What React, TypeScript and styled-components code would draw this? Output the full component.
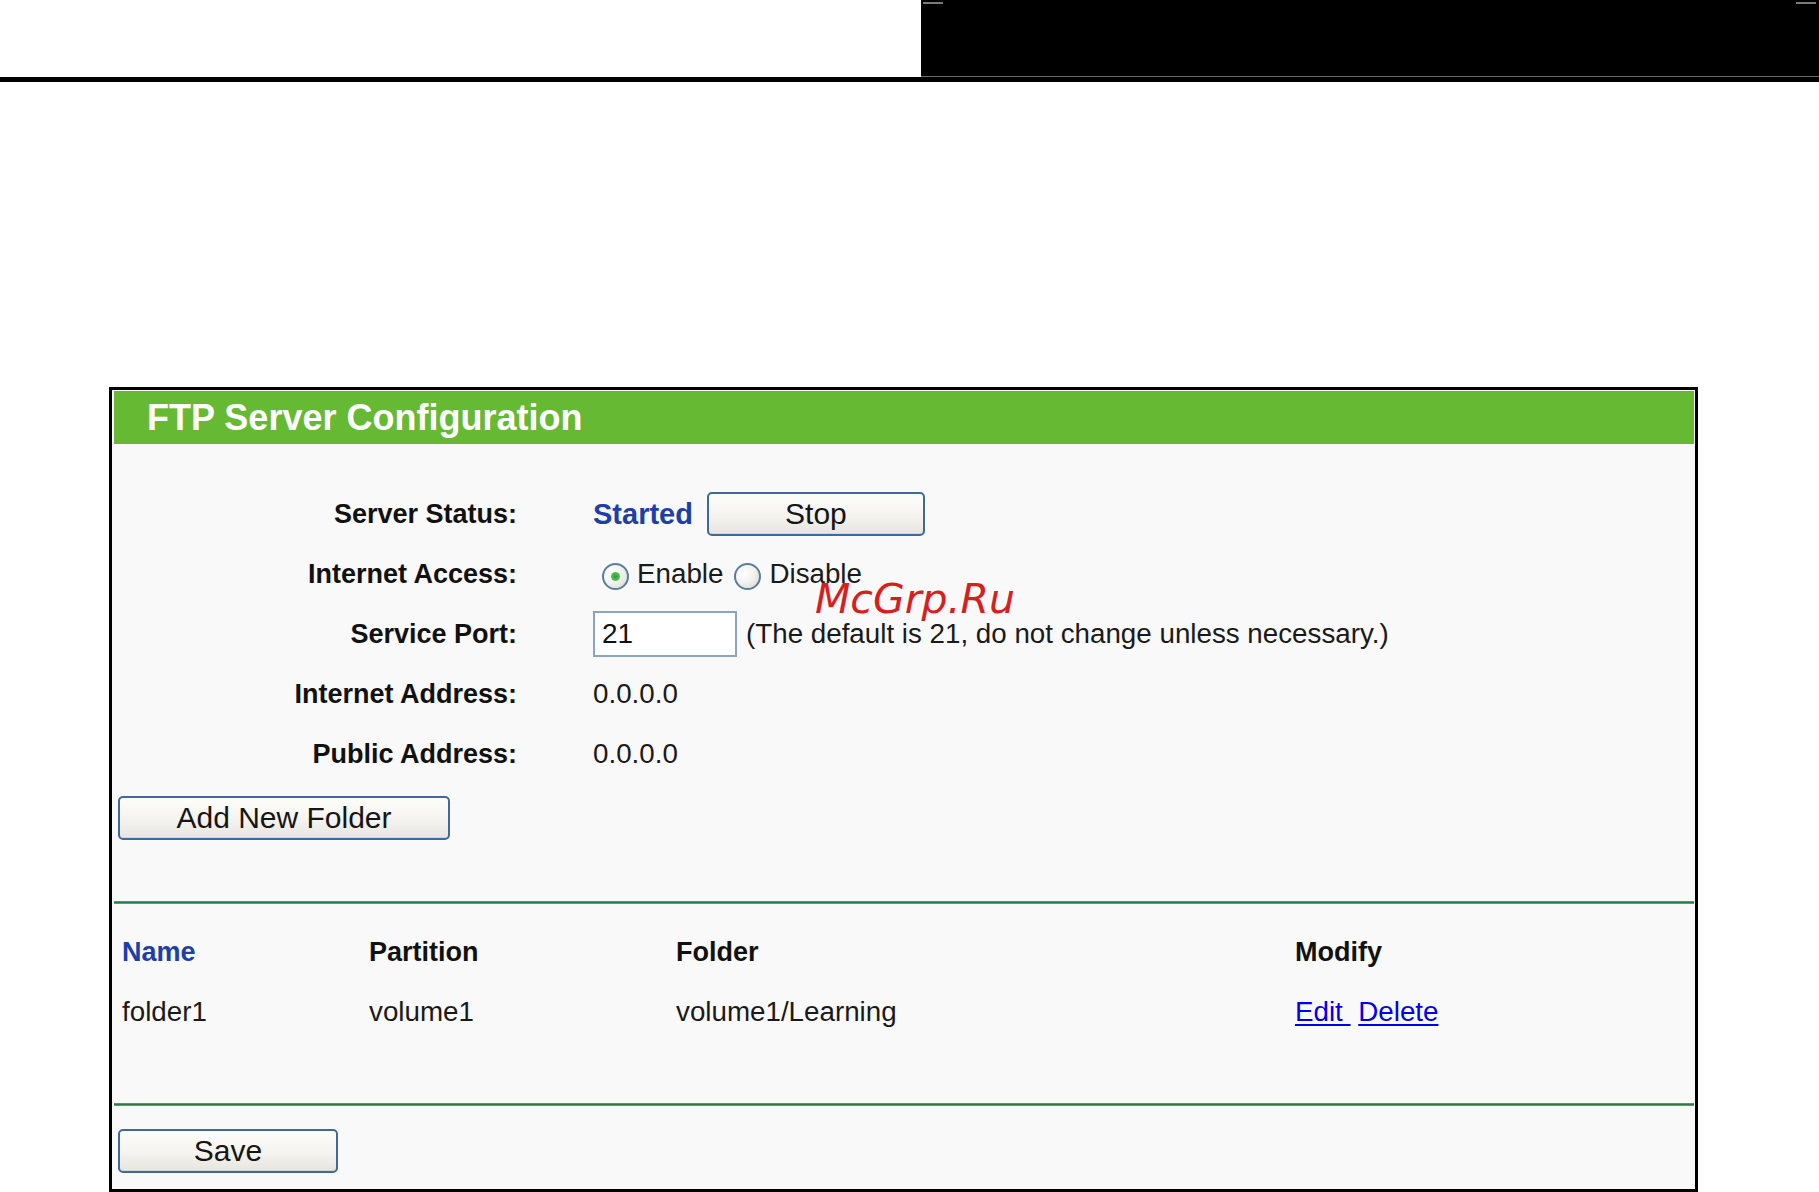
import React from "react";
import styled, { createGlobalStyle } from "styled-components";

const Global = createGlobalStyle`
  html, body { margin: 0; padding: 0; background: #ffffff; }
  body { font-family: "Liberation Sans", Arial, sans-serif; color: #111; }
  #root { width: 1819px; height: 1192px; overflow: hidden; }
`;

const Page = styled.div`
  position: relative;
  width: 1819px;
  height: 1192px;
  background: #ffffff;
`;

const TopBar = styled.div`
  display: flex;
  height: 77px;
`;

const TopBlank = styled.div`
  flex: 0 0 921px;
  background: #ffffff;
`;

const TopBlack = styled.div`
  position: relative;
  flex: 1;
  background: #000000;
  border-bottom: 1px solid #6a6a6a;
  box-sizing: border-box;
`;

const Tick = styled.span<{ $side: "left" | "right" }>`
  position: absolute;
  top: 2px;
  ${(p) => (p.$side === "left" ? "left: 2px;" : "right: 3px;")}
  width: 20px;
  height: 2px;
  background: #7a7a7a;
`;

const Rule = styled.div`
  height: 5px;
  background: #000000;
`;

const Panel = styled.section`
  box-sizing: border-box;
  margin: 305px 0 0 109px;
  width: 1589px;
  height: 805px;
  border: 3px solid #000000;
  background: #f9f9f9;
  padding: 1px 1px 0 2px;
  display: flex;
  flex-direction: column;
`;

const Header = styled.h1`
  margin: 0;
  height: 53px;
  background: #66b933;
  color: #ffffff;
  font: bold 36px "Liberation Sans", Arial, sans-serif;
  display: flex;
  align-items: center;
  padding-left: 33px;
`;

const Form = styled.div`
  margin-top: 40px;
  display: flex;
  flex-direction: column;
`;

const FormRow = styled.div`
  display: grid;
  grid-template-columns: 403px 1fr;
  column-gap: 76px;
  height: 60px;
  align-items: center;
`;

const Label = styled.div`
  text-align: right;
  font: bold 27px "Liberation Sans", Arial, sans-serif;
  color: #111;
`;

const Value = styled.div`
  display: flex;
  align-items: center;
  font: 27.75px "Liberation Sans", Arial, sans-serif;
  color: #1a1a1a;
`;

const Status = styled.span`
  font: bold 29px "Liberation Sans", Arial, sans-serif;
  color: #1c3fa8;
  margin-right: 14px;
`;

const Button = styled.button<{ $w: number }>`
  box-sizing: border-box;
  width: ${(p) => p.$w}px;
  height: 44px;
  border: 2px solid #3d6a9c;
  border-radius: 5px;
  background: linear-gradient(#fdfdfb 0%, #f4f3ef 55%, #e6e5df 100%);
  box-shadow: inset 0 -1px 0 #d8d7d0;
  font: 30px "Liberation Sans", Arial, sans-serif;
  color: #151515;
  padding: 0;
  cursor: pointer;
`;

const RadioLabel = styled.label<{ $first?: boolean }>`
  display: flex;
  align-items: center;
  margin-left: ${(p) => (p.$first ? 9 : 11)}px;
`;

const RadioDot = styled.span<{ $checked?: boolean }>`
  box-sizing: border-box;
  width: 27px;
  height: 27px;
  border-radius: 50%;
  border: 2px solid #5b7d9c;
  background: radial-gradient(circle at 35% 35%, #ffffff 0%, #f1f1ec 50%, #d5d5cf 100%);
  margin: 5px 8px 0 0;
  display: flex;
  align-items: center;
  justify-content: center;
  &::after {
    content: "";
    display: ${(p) => (p.$checked ? "block" : "none")};
    width: 9px;
    height: 9px;
    border-radius: 50%;
    background: radial-gradient(circle, #2f9e3a 0%, #4cc04f 60%, #8fd88c 100%);
  }
`;

const PortInput = styled.input`
  box-sizing: border-box;
  width: 144px;
  height: 46px;
  border: 2px solid #8aa5c4;
  background: #ffffff;
  font: 28px "Liberation Sans", Arial, sans-serif;
  color: #111;
  padding: 0 0 0 7px;
  margin-right: 9px;
  outline: none;
`;

const ButtonRow = styled.div<{ $top: number }>`
  margin-top: ${(p) => p.$top}px;
  padding-left: 4px;
  display: flex;
`;

const Separator = styled.hr<{ $top: number }>`
  margin: ${(p) => p.$top}px 0 0 0;
  border: none;
  height: 3px;
  background: linear-gradient(#7fb08f 0%, #2c7a48 35%, #2c7a48 70%, #9cc6a8 100%);
`;

const Table = styled.div`
  margin-top: 18px;
  display: flex;
  flex-direction: column;
  padding-left: 8px;
`;

const TRow = styled.div`
  display: grid;
  grid-template-columns: 247px 307px 619px 1fr;
  height: 60px;
  align-items: center;
`;

const TH = styled.div<{ $blue?: boolean }>`
  font: bold 27px "Liberation Sans", Arial, sans-serif;
  color: ${(p) => (p.$blue ? "#1c3fa8" : "#111")};
`;

const TD = styled.div`
  font: 27.75px "Liberation Sans", Arial, sans-serif;
  color: #1a1a1a;
  white-space: pre;
`;

const Link = styled.a`
  color: #0000ee;
  text-decoration: underline;
  text-underline-offset: 3px;
  cursor: pointer;
`;

const Watermark = styled.div`
  position: absolute;
  left: 815px;
  top: 579px;
  font: italic 41px "DejaVu Sans", "Liberation Sans", sans-serif;
  color: #d61f1f;
  line-height: 1;
  pointer-events: none;
`;

export default function App() {
  return (
    <Page>
      <Global />
      <TopBar>
        <TopBlank />
        <TopBlack>
          <Tick $side="left" />
          <Tick $side="right" />
        </TopBlack>
      </TopBar>
      <Rule />
      <Panel>
        <Header>FTP Server Configuration</Header>
        <Form>
          <FormRow>
            <Label>Server Status:</Label>
            <Value>
              <Status>Started</Status>
              <Button $w={218}>Stop</Button>
            </Value>
          </FormRow>
          <FormRow>
            <Label>Internet Access:</Label>
            <Value>
              <RadioLabel $first>
                <RadioDot $checked />
                Enable
              </RadioLabel>
              <RadioLabel>
                <RadioDot />
                Disable
              </RadioLabel>
            </Value>
          </FormRow>
          <FormRow>
            <Label>Service Port:</Label>
            <Value>
              <PortInput defaultValue="21" />
              (The default is 21, do not change unless necessary.)
            </Value>
          </FormRow>
          <FormRow>
            <Label>Internet Address:</Label>
            <Value>0.0.0.0</Value>
          </FormRow>
          <FormRow>
            <Label>Public Address:</Label>
            <Value>0.0.0.0</Value>
          </FormRow>
        </Form>
        <ButtonRow $top={12}>
          <Button $w={332}>Add New Folder</Button>
        </ButtonRow>
        <Separator $top={61} />
        <Table>
          <TRow>
            <TH $blue>Name</TH>
            <TH>Partition</TH>
            <TH>Folder</TH>
            <TH>Modify</TH>
          </TRow>
          <TRow>
            <TD>folder1</TD>
            <TD>volume1</TD>
            <TD>volume1/Learning</TD>
            <TD>
              <Link>Edit </Link> <Link>Delete</Link>
            </TD>
          </TRow>
        </Table>
        <Separator $top={61} />
        <ButtonRow $top={23}>
          <Button $w={220}>Save</Button>
        </ButtonRow>
      </Panel>
      <Watermark>McGrp.Ru</Watermark>
    </Page>
  );
}
